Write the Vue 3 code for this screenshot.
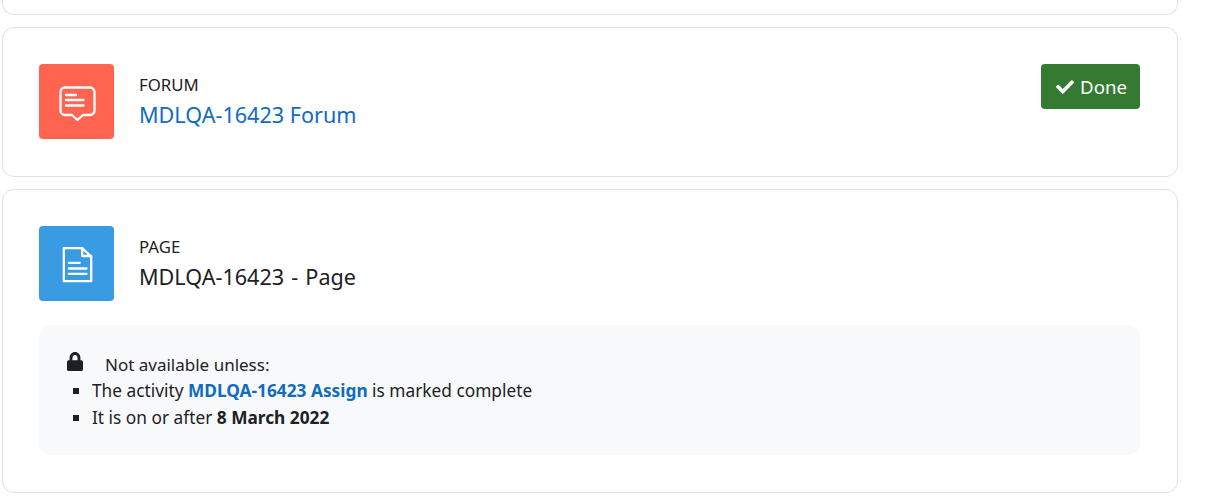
<template>
  <div class="page">
    <div class="card card--stub"></div>

    <div class="card">
      <div class="activity">
        <div class="icon icon--forum">
          <svg width="38" height="38" viewBox="0 0 38 38" fill="none" stroke="#fff" stroke-width="2.300" stroke-linecap="round" stroke-linejoin="round">
            <path d="M7 4.500h25a4.500 4.500 0 0 1 4.500 4.500v18.500a4.500 4.500 0 0 1-4.500 4.500h-7l-5.500 5-5.500-5H7a4.500 4.500 0 0 1-4.500-4.500V9A4.500 4.500 0 0 1 7 4.500z" />
            <path d="M8 12h10M8 17h17.500M8 22.500h17.500" />
          </svg>
        </div>
        <div class="info">
          <div class="type">FORUM</div>
          <a class="name name--link">MDLQA-16423 Forum</a>
        </div>
        <div class="done">
          <svg width="18" height="18" viewBox="0 0 512 512"><path d="M173.898 439.404l-166.400-166.400c-9.997-9.997-9.997-26.206 0-36.204l36.203-36.204c9.997-9.998 26.207-9.998 36.204 0L192 312.690 432.095 72.596c9.997-9.997 26.207-9.997 36.204 0l36.203 36.204c9.997 9.997 9.997 26.206 0 36.204l-294.400 294.401c-9.998 9.997-26.207 9.997-36.204-.001z" fill="#fff" /></svg>
          <span>Done</span>
        </div>
      </div>
    </div>

    <div class="card">
      <div class="activity">
        <div class="icon icon--page">
          <svg width="38" height="38" viewBox="0 0 38 38" fill="none" stroke="#fff" stroke-width="2.300" stroke-linejoin="round" stroke-linecap="round">
            <path d="M5.800 3.200h18.400l9 8.300v24.700H5.800z" />
            <path d="M24.200 3.200v7.800h9" />
            <path d="M10.800 17.800h11M10.800 23.500h17.700M10.800 28.800h17.700" />
          </svg>
        </div>
        <div class="info">
          <div class="type">PAGE</div>
          <div class="name name--page">MDLQA-16423 - Page</div>
        </div>
      </div>
      <div class="avail">
        <div class="avail-head">
          <svg class="lock" width="16" height="19" viewBox="0 0 448 512" preserveAspectRatio="none"><path d="M400 224h-24v-72C376 68.200 307.800 0 224 0S72 68.200 72 152v72H48c-26.500 0-48 21.500-48 48v192c0 26.500 21.500 48 48 48h352c26.500 0 48-21.500 48-48V272c0-26.500-21.500-48-48-48zm-104 0H152v-72c0-39.700 32.300-72 72-72s72 32.300 72 72v72z" fill="#1d2125" /></svg>
          <span>Not available unless:</span>
        </div>
        <ul>
          <li>The activity <a><b>MDLQA-16423 Assign</b></a> is marked complete</li>
          <li>It is on or after <b>8 March 2022</b></li>
        </ul>
      </div>
    </div>
  </div>
</template>

<script setup>
</script>

<style>
html, body {
  background: #fff;
}
</style>

<style scoped>
.page {
  width: 1176px;
  margin-left: 2px;
  font-family: "Noto Sans", "Open Sans", sans-serif;
  font-size: 16px;
  color: #1d2125;
}

.card {
  border: 1px solid #dee2e6;
  border-radius: 12px;
  padding: 36px 37px 37px 36px;
  margin-bottom: 12px;
  box-sizing: border-box;
}

.card--stub {
  height: 15px;
  padding: 0;
  border-top: none;
  border-top-left-radius: 0;
  border-top-right-radius: 0;
}

.activity {
  display: flex;
  align-items: center;
  gap: 25px;
}

.icon {
  width: 75px;
  height: 75px;
  border-radius: 4px;
  display: flex;
  align-items: center;
  justify-content: center;
  flex-shrink: 0;
}

.icon--forum {
  background: #ff6450;
}

.icon--page {
  background: #399be2;
}

.info {
  flex: 1;
}

.type {
  font-size: 16.8px;
  line-height: 22px;
  margin-bottom: 4px;
}

.name {
  display: block;
  font-size: 21.6px;
  line-height: 30px;
}

.name--link {
  color: #0f6cbf;
}

.name--page {
  word-spacing: 1.5px;
}

.done {
  align-self: flex-start;
  display: flex;
  align-items: center;
  gap: 6px;
  height: 45px;
  width: 99px;
  box-sizing: border-box;
  padding-left: 15px;
  border-radius: 4px;
  background: #357a32;
  color: #fff;
  font-size: 18.7px;
}

.avail {
  margin-top: 24px;
  padding: 26px 28px 24px 28px;
  height: 130px;
  box-sizing: border-box;
  background: #f8f9fa;
  border-radius: 12px;
  font-size: 17.3px;
  line-height: 27px;
}

.avail-head {
  display: flex;
  align-items: center;
  height: 27px;
  font-size: 17px;
}

.lock {
  margin-right: 22px;
  margin-top: -7px;
}

ul {
  margin: -1px 0 0;
  padding: 0 0 0 25px;
  list-style: square;
}

a {
  color: #0f6cbf;
  text-decoration: none;
}
</style>
